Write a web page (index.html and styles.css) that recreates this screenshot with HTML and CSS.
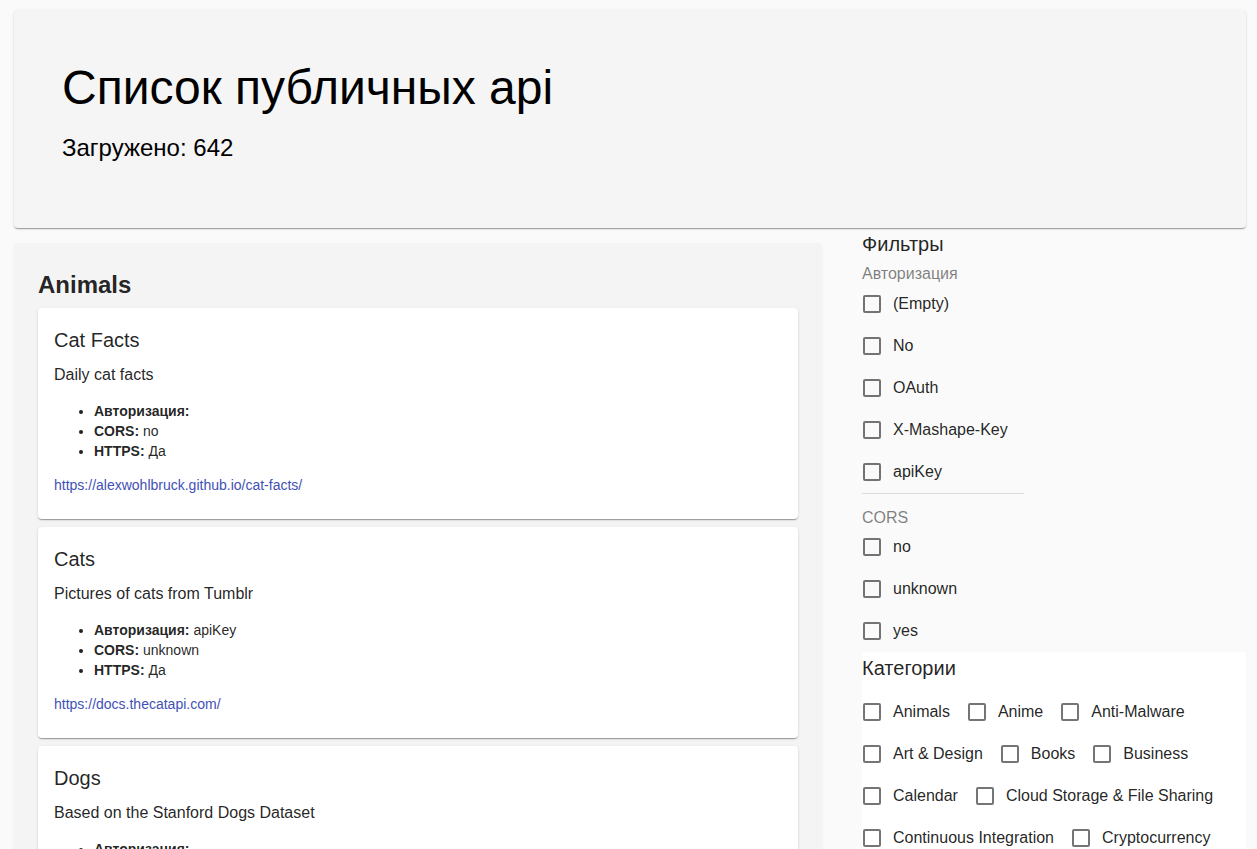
FILE: index.html
```html
<!DOCTYPE html>
<html lang="ru">
<head>
<meta charset="utf-8">
<title>Список публичных api</title>
<link rel="stylesheet" href="styles.css">
</head>
<body>
<div class="page">
  <header class="hero">
    <h1 class="hero-title">Список публичных api</h1>
    <p class="hero-sub">Загружено: 642</p>
  </header>

  <div class="layout">
    <main class="panel">
      <h2 class="category-title">Animals</h2>
      <div class="cards">
        <article class="card">
          <h3 class="card-title">Cat Facts</h3>
          <p class="card-desc">Daily cat facts</p>
          <ul class="card-props">
            <li><b>Авторизация:</b> </li>
            <li><b>CORS:</b> no</li>
            <li><b>HTTPS:</b> Да</li>
          </ul>
          <a class="card-link" href="#">https://alexwohlbruck.github.io/cat-facts/</a>
        </article>
        <article class="card">
          <h3 class="card-title">Cats</h3>
          <p class="card-desc">Pictures of cats from Tumblr</p>
          <ul class="card-props">
            <li><b>Авторизация:</b> apiKey</li>
            <li><b>CORS:</b> unknown</li>
            <li><b>HTTPS:</b> Да</li>
          </ul>
          <a class="card-link" href="#">https://docs.thecatapi.com/</a>
        </article>
        <article class="card">
          <h3 class="card-title">Dogs</h3>
          <p class="card-desc">Based on the Stanford Dogs Dataset</p>
          <ul class="card-props">
            <li><b>Авторизация:</b> </li>
            <li><b>CORS:</b> yes</li>
            <li><b>HTTPS:</b> Да</li>
          </ul>
          <a class="card-link" href="#">https://dog.ceo/dog-api/</a>
        </article>
      </div>
    </main>

    <aside class="filters">
      <h2 class="filters-title">Фильтры</h2>

      <div class="group">
        <div class="legend">Авторизация</div>
        <label class="check"><span class="box"></span><span class="check-label">(Empty)</span></label>
        <label class="check"><span class="box"></span><span class="check-label">No</span></label>
        <label class="check"><span class="box"></span><span class="check-label">OAuth</span></label>
        <label class="check"><span class="box"></span><span class="check-label">X-Mashape-Key</span></label>
        <label class="check"><span class="box"></span><span class="check-label">apiKey</span></label>
      </div>

      <div class="group group-last">
        <div class="legend legend-cors">CORS</div>
        <label class="check"><span class="box"></span><span class="check-label">no</span></label>
        <label class="check"><span class="box"></span><span class="check-label">unknown</span></label>
        <label class="check"><span class="box"></span><span class="check-label">yes</span></label>
      </div>

      <section class="categories">
        <h2 class="filters-title cat-title">Категории</h2>
        <div class="cat-list">
          <label class="check"><span class="box"></span><span class="check-label">Animals</span></label>
          <label class="check"><span class="box"></span><span class="check-label">Anime</span></label>
          <label class="check"><span class="box"></span><span class="check-label">Anti-Malware</span></label>
          <label class="check"><span class="box"></span><span class="check-label">Art &amp; Design</span></label>
          <label class="check"><span class="box"></span><span class="check-label">Books</span></label>
          <label class="check"><span class="box"></span><span class="check-label">Business</span></label>
          <label class="check"><span class="box"></span><span class="check-label">Calendar</span></label>
          <label class="check"><span class="box"></span><span class="check-label">Cloud Storage &amp; File Sharing</span></label>
          <label class="check"><span class="box"></span><span class="check-label">Continuous Integration</span></label>
          <label class="check"><span class="box"></span><span class="check-label">Cryptocurrency</span></label>
          <label class="check"><span class="box"></span><span class="check-label">Currency Exchange</span></label>
          <label class="check"><span class="box"></span><span class="check-label">Data Validation</span></label>
          <label class="check"><span class="box"></span><span class="check-label">Development</span></label>
          <label class="check"><span class="box"></span><span class="check-label">Dictionaries</span></label>
          <label class="check"><span class="box"></span><span class="check-label">Documents &amp; Productivity</span></label>
          <label class="check"><span class="box"></span><span class="check-label">Environment</span></label>
        </div>
      </section>
    </aside>
  </div>
</div>
</body>
</html>
```

FILE: styles.css
```css
html, body {
  margin: 0;
  padding: 0;
}
::-webkit-scrollbar {
  display: none;
}
html {
  scrollbar-width: none;
}
body {
  background: #fafafa;
  font-family: "Liberation Sans", Arial, sans-serif;
  color: rgba(0, 0, 0, 0.87);
}

.page {
  padding: 10px 11px 0 14px;
}

.hero {
  background: #f5f5f5;
  border-radius: 4px;
  box-shadow: 0 2px 1px -1px rgba(0,0,0,0.2), 0 1px 1px 0 rgba(0,0,0,0.14), 0 1px 3px 0 rgba(0,0,0,0.12);
  padding: 50px 48px 66px;
}
.hero-title {
  margin: 0;
  font-size: 48px;
  line-height: 56px;
  font-weight: 400;
  color: #000;
}
.hero-sub {
  margin: 18px 0 0;
  font-size: 24px;
  line-height: 28px;
  color: #000;
}

.layout {
  display: flex;
  gap: 40px;
  margin-top: 4px;
  align-items: flex-start;
}

.panel {
  width: 808px;
  flex: none;
  box-sizing: border-box;
  margin-top: 11px;
  background: #f4f4f4;
  border-radius: 4px;
  box-shadow: 0 1px 2px 0 rgba(0,0,0,0.08);
  padding: 26px 24px 24px;
}
.category-title {
  margin: 0 0 7px;
  font-size: 24px;
  line-height: 32px;
  font-weight: 700;
  color: rgba(0,0,0,0.87);
}
.cards {
  display: flex;
  flex-direction: column;
  gap: 8px;
}
.card {
  background: #fff;
  border-radius: 4px;
  box-shadow: 0 2px 1px -1px rgba(0,0,0,0.2), 0 1px 1px 0 rgba(0,0,0,0.14), 0 1px 3px 0 rgba(0,0,0,0.12);
  padding: 16px 16px 24px;
}
.card-title {
  margin: 0;
  font-size: 20px;
  line-height: 32px;
  font-weight: 400;
}
.card-desc {
  margin: 7px 0 0;
  font-size: 16px;
  line-height: 24px;
}
.card-props {
  margin: 14px 0 0;
  padding-left: 40px;
  font-size: 14px;
  line-height: 20px;
}
.card-props b {
  font-weight: 700;
}
.card-link {
  display: block;
  margin-top: 14px;
  font-size: 14px;
  line-height: 20px;
  color: #3f51b5;
  text-decoration: none;
}

.filters {
  flex: 1;
  min-width: 0;
}
.filters-title {
  margin: 0;
  font-size: 20px;
  line-height: 24px;
  font-weight: 400;
  color: rgba(0,0,0,0.87);
}
.group {
  display: inline-flex;
  flex-direction: column;
  align-items: flex-start;
  border-bottom: 1px solid #dcdcdc;
}
.group-last {
  border-bottom: none;
  display: flex;
}
.legend {
  margin-top: 9px;
  font-size: 16px;
  line-height: 18px;
  color: rgba(0,0,0,0.5);
}
.legend-cors {
  margin-top: 15px;
  margin-bottom: -1px;
}

.check {
  display: flex;
  align-items: center;
  height: 42px;
  margin-right: 16px;
  font-size: 16px;
  color: rgba(0,0,0,0.87);
  cursor: pointer;
}
.box {
  width: 18px;
  height: 18px;
  box-sizing: border-box;
  border: 2px solid rgba(0,0,0,0.54);
  border-radius: 2px;
  margin-left: 1px;
  margin-right: 12px;
  flex: none;
}
.check-label {
  white-space: nowrap;
}

.categories {
  background: #fff;
  border-radius: 4px;
  padding-top: 4px;
}
.cat-title {
  margin-bottom: 11px;
}
.cat-list {
  display: flex;
  flex-wrap: wrap;
}
.cat-list .check {
  margin-right: 17px;
}
```
